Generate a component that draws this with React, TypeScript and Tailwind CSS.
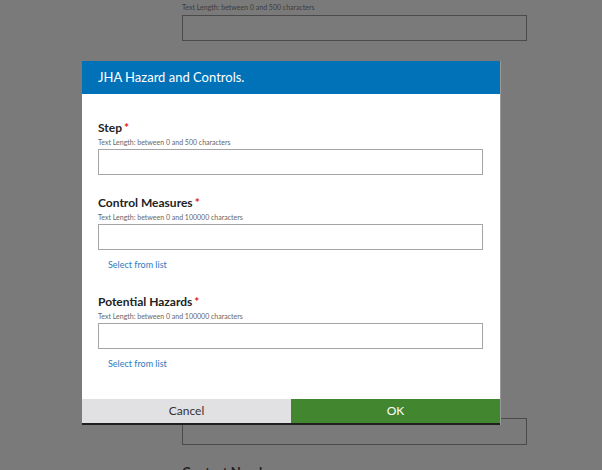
import React from 'react';

const font = { fontFamily: 'Lato, "Open Sans", Arial, sans-serif' };

function Field({ label, limit, link }: { label: string; limit: string; link?: boolean }) {
  return (
    <div className="flex flex-col">
      <div className="h-4 text-[12px] font-bold leading-4 text-[#222]">
        {label}
        <span className="ml-[2px] text-[#e0202a]">*</span>
      </div>
      <div className="mt-[1px] h-[10px] text-[7px] leading-[10px] text-[#666]">{limit}</div>
      <div className="mt-[2px] h-[26px] border border-[#a5a5a5] bg-white" />
      {link && (
        <div className="mt-[9px] h-3 pl-[10px] text-[9px] leading-3 text-[#2b7bbf]">Select from list</div>
      )}
    </div>
  );
}

export default function App() {
  return (
    <div className="relative h-[470px] w-[602px] overflow-hidden bg-[#7a7a7a]" style={font}>
      {/* page underneath the overlay */}
      <div className="ml-[182px] flex w-[345px] flex-col">
        <div className="mt-[2px] h-[10px] text-[7px] leading-[10px] text-[#3c3c3c]">
          Text Length: between 0 and 500 characters
        </div>
        <div className="mt-[3px] h-[26px] border border-[#4a4a4a]" />
        <div className="mt-[377px] h-[27px] border border-[#4a4a4a]" />
        <div className="mt-[18px] text-[13px] font-bold text-[#222]">Contact Number</div>
      </div>

      {/* dialog */}
      <div className="absolute left-[82px] top-[61px] flex w-[419px] flex-col border-r border-[#9a9a9a] bg-white">
        <div className="flex h-[33px] items-center bg-[#0172b8] pl-4 text-[13px] text-white">
          JHA Hazard and Controls.
        </div>
        <div className="flex flex-col pl-4 pr-[17px] pt-[26px] pb-[29px]">
          <Field label="Step" limit="Text Length: between 0 and 500 characters" />
          <div className="mt-5">
            <Field label="Control Measures" limit="Text Length: between 0 and 100000 characters" link />
          </div>
          <div className="mt-[23px]">
            <Field label="Potential Hazards" limit="Text Length: between 0 and 100000 characters" link />
          </div>
        </div>
        <div className="flex h-[26px] border-b-2 border-[#1f1f1f]">
          <div className="flex w-[209px] items-center justify-center bg-[#e1e1e3] text-[12px] text-[#333]">
            Cancel
          </div>
          <div className="flex flex-1 items-center justify-center bg-[#438630] text-[12px] text-white">OK</div>
        </div>
      </div>
    </div>
  );
}
